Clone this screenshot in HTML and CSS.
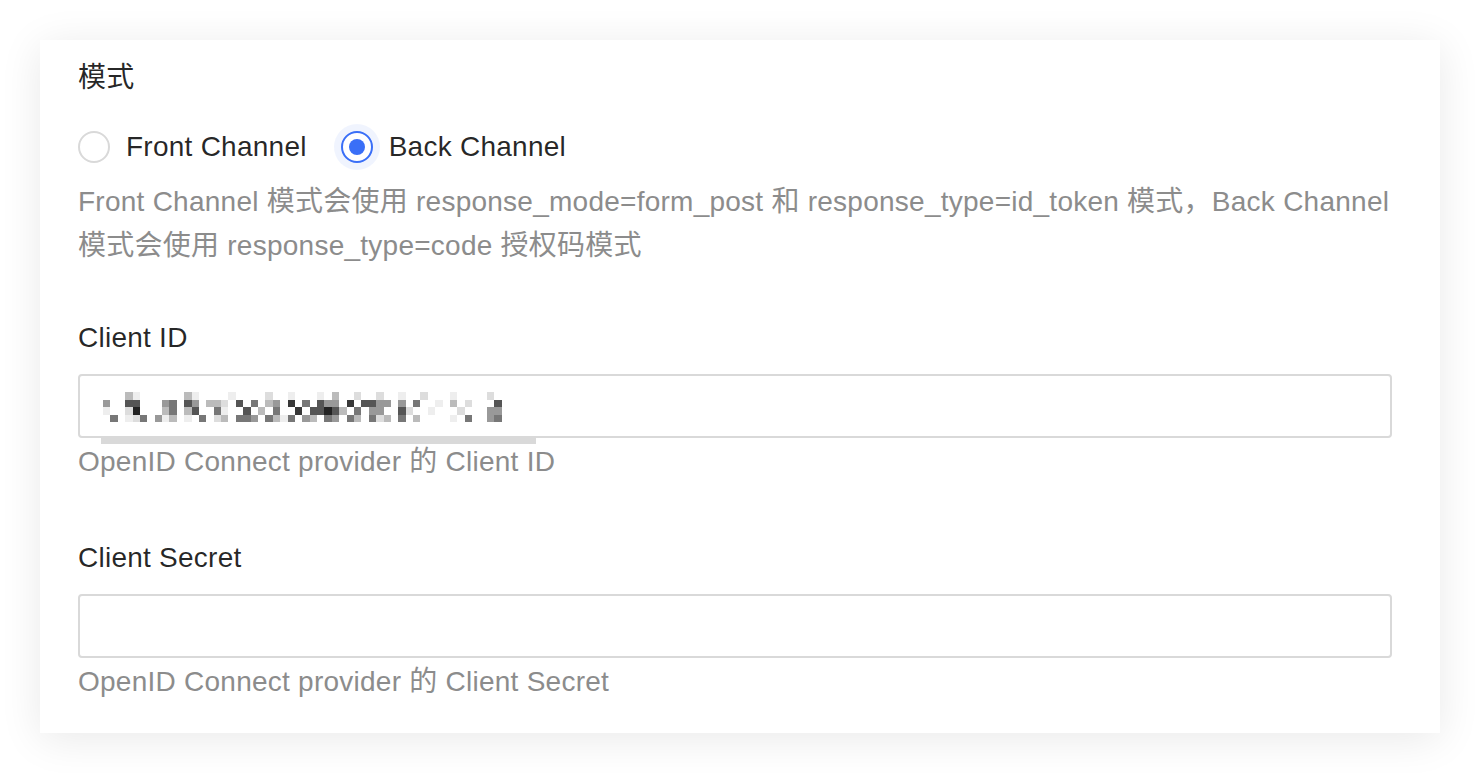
FILE: index.html
```html
<!DOCTYPE html>
<html lang="zh">
<head>
<meta charset="utf-8">
<title>OIDC</title>
<link rel="stylesheet" href="styles.css">
</head>
<body>
<div class="card">
  <div class="item">
    <div class="label">模式</div>
    <div class="control-input">
      <div class="radio-group">
        <label class="radio"><span class="radio-circle"></span><span class="radio-text">Front Channel</span></label>
        <label class="radio"><span class="radio-circle checked"></span><span class="radio-text">Back Channel</span></label>
      </div>
    </div>
    <div class="extra">Front Channel 模式会使用 response_mode=form_post 和 response_type=id_token 模式，Back Channel 模式会使用 response_type=code 授权码模式</div>
  </div>

  <div class="item">
    <div class="label">Client ID</div>
    <div class="control-input">
      <div class="input has-value">
        <svg class="mosaic" width="406" height="30" viewBox="0 0 55 4" preserveAspectRatio="none" shape-rendering="crispEdges">
          <g fill="#eee">
            <rect x="4" y="0" width="1" height="1"/><rect x="12" y="0" width="1" height="1"/><rect x="17" y="0" width="1" height="1"/><rect x="25" y="0" width="1" height="1"/><rect x="29" y="0" width="1" height="1"/><rect x="40" y="0" width="1" height="1"/><rect x="47" y="0" width="1" height="1"/>
            <rect x="45" y="1" width="1" height="1"/>
            <rect x="0" y="2" width="1" height="1"/><rect x="16" y="2" width="1" height="1"/><rect x="44" y="2" width="1" height="1"/>
            <rect x="3" y="3" width="1" height="1"/><rect x="8" y="3" width="1" height="1"/><rect x="11" y="3" width="1" height="1"/><rect x="24" y="3" width="1" height="1"/><rect x="47" y="3" width="1" height="1"/>
          </g>
          <g fill="#ddd">
            <rect x="22" y="0" width="1" height="1"/><rect x="34" y="0" width="1" height="1"/><rect x="37" y="0" width="1" height="1"/><rect x="43" y="0" width="1" height="1"/><rect x="52" y="0" width="1" height="1"/>
            <rect x="16" y="1" width="1" height="1"/><rect x="49" y="1" width="1" height="1"/>
            <rect x="3" y="2" width="1" height="1"/><rect x="41" y="2" width="1" height="1"/><rect x="48" y="2" width="1" height="1"/>
            <rect x="4" y="3" width="1" height="1"/><rect x="15" y="3" width="1" height="1"/><rect x="37" y="3" width="1" height="1"/>
          </g>
          <g fill="#bbb">
            <rect x="3" y="0" width="1" height="1"/><rect x="11" y="0" width="1" height="1"/><rect x="31" y="0" width="1" height="1"/>
            <rect x="14" y="1" width="1" height="1"/><rect x="15" y="1" width="1" height="1"/><rect x="22" y="1" width="1" height="1"/><rect x="47" y="1" width="1" height="1"/>
            <rect x="8" y="2" width="1" height="1"/><rect x="11" y="2" width="1" height="1"/><rect x="21" y="2" width="1" height="1"/><rect x="32" y="2" width="1" height="1"/>
            <rect x="9" y="3" width="1" height="1"/><rect x="16" y="3" width="1" height="1"/><rect x="23" y="3" width="1" height="1"/><rect x="28" y="3" width="1" height="1"/><rect x="34" y="3" width="1" height="1"/><rect x="38" y="3" width="1" height="1"/><rect x="42" y="3" width="1" height="1"/>
          </g>
          <g fill="#999">
            <rect x="0" y="1" width="1" height="1"/><rect x="8" y="1" width="1" height="1"/><rect x="12" y="1" width="1" height="1"/><rect x="23" y="1" width="1" height="1"/><rect x="30" y="1" width="1" height="1"/><rect x="31" y="1" width="1" height="1"/><rect x="37" y="1" width="1" height="1"/><rect x="38" y="1" width="1" height="1"/><rect x="40" y="1" width="1" height="1"/>
            <rect x="36" y="2" width="1" height="1"/><rect x="37" y="2" width="1" height="1"/><rect x="52" y="2" width="1" height="1"/><rect x="53" y="2" width="1" height="1"/>
            <rect x="7" y="3" width="1" height="1"/><rect x="20" y="3" width="1" height="1"/><rect x="27" y="3" width="1" height="1"/><rect x="31" y="3" width="1" height="1"/><rect x="52" y="3" width="1" height="1"/>
          </g>
          <g fill="#777">
            <rect x="9" y="1" width="1" height="1"/><rect x="20" y="1" width="1" height="1"/><rect x="27" y="1" width="1" height="1"/><rect x="42" y="1" width="1" height="1"/>
            <rect x="9" y="2" width="1" height="1"/><rect x="15" y="2" width="1" height="1"/><rect x="23" y="2" width="1" height="1"/><rect x="34" y="2" width="1" height="1"/>
            <rect x="1" y="3" width="1" height="1"/><rect x="5" y="3" width="1" height="1"/><rect x="13" y="3" width="1" height="1"/><rect x="18" y="3" width="1" height="1"/><rect x="19" y="3" width="1" height="1"/><rect x="22" y="3" width="1" height="1"/><rect x="25" y="3" width="1" height="1"/><rect x="30" y="3" width="1" height="1"/><rect x="33" y="3" width="1" height="1"/><rect x="36" y="3" width="1" height="1"/><rect x="40" y="3" width="1" height="1"/><rect x="49" y="3" width="1" height="1"/><rect x="53" y="3" width="1" height="1"/>
          </g>
          <g fill="#555">
            <rect x="3" y="1" width="1" height="1"/><rect x="4" y="1" width="1" height="1"/><rect x="11" y="1" width="1" height="1"/><rect x="18" y="1" width="1" height="1"/><rect x="29" y="1" width="1" height="1"/><rect x="35" y="1" width="1" height="1"/><rect x="36" y="1" width="1" height="1"/><rect x="53" y="1" width="1" height="1"/>
            <rect x="12" y="2" width="1" height="1"/><rect x="19" y="2" width="1" height="1"/><rect x="28" y="2" width="1" height="1"/><rect x="29" y="2" width="1" height="1"/><rect x="31" y="2" width="1" height="1"/><rect x="40" y="2" width="1" height="1"/>
          </g>
          <g fill="#383838">
            <rect x="25" y="1" width="1" height="1"/><rect x="33" y="1" width="1" height="1"/>
            <rect x="26" y="2" width="1" height="1"/>
          </g>
          <g fill="#222">
            <rect x="4" y="2" width="1" height="1"/><rect x="30" y="2" width="1" height="1"/>
          </g>
        </svg>
        <span class="scroll-bar"></span>
      </div>
    </div>
    <div class="extra">OpenID Connect provider 的 Client ID</div>
  </div>

  <div class="item">
    <div class="label">Client Secret</div>
    <div class="control-input">
      <div class="input"></div>
    </div>
    <div class="extra">OpenID Connect provider 的 Client Secret</div>
  </div>
</div>
</body>
</html>
```

FILE: styles.css
```css
html, body {
  margin: 0;
  padding: 0;
  background: #ffffff;
}

body {
  padding: 40px;
  font-family: "Liberation Sans", "Noto Sans CJK SC", sans-serif;
  font-size: 28px;
  letter-spacing: 0.25px;
  color: rgba(0, 0, 0, 0.85);
}

.card {
  width: 1400px;
  box-sizing: border-box;
  background: #fff;
  padding: 14px 48px 27px 38px;
  box-shadow: 0 6px 40px rgba(0, 0, 0, 0.09);
}

.item {
  margin-bottom: 48px;
}

.item:last-child {
  margin-bottom: 0;
}

.label {
  line-height: 44px;
  padding-top: 2px;
  padding-bottom: 14px;
  color: rgba(0, 0, 0, 0.85);
}

.control-input {
  min-height: 64px;
  display: flex;
  align-items: center;
}

.extra {
  min-height: 48px;
  padding-top: 2px;
  margin-bottom: -2px;
  line-height: 44px;
  color: #8c8c8c;
}

.radio-group {
  display: flex;
  align-items: center;
  padding-top: 1px;
}

.radio {
  display: inline-flex;
  align-items: center;
  margin-right: 18px;
  line-height: 44px;
  cursor: pointer;
}

.radio-circle {
  position: relative;
  width: 32px;
  height: 32px;
  box-sizing: border-box;
  border: 2px solid #d9d9d9;
  border-radius: 50%;
  background: #fff;
}

.radio-circle.checked {
  border-color: #3a6ff7;
  box-shadow: 0 0 0 7px rgba(58, 111, 247, 0.08);
}

.radio-circle.checked::after {
  content: "";
  position: absolute;
  left: 6px;
  top: 6px;
  width: 16px;
  height: 16px;
  border-radius: 50%;
  background: #3a6ff7;
}

.radio-text {
  padding: 0 16px;
}

.input {
  position: relative;
  width: 100%;
  height: 64px;
  box-sizing: border-box;
  border: 2px solid #d9d9d9;
  border-radius: 4px;
  background: #fff;
  display: flex;
  align-items: center;
  padding: 0 22px;
}

.mosaic {
  display: block;
  margin-left: 1px;
  margin-top: 2px;
}

.scroll-bar {
  position: absolute;
  left: 21px;
  bottom: -8px;
  width: 435px;
  height: 6px;
  background: #d9d9d9;
}
```
